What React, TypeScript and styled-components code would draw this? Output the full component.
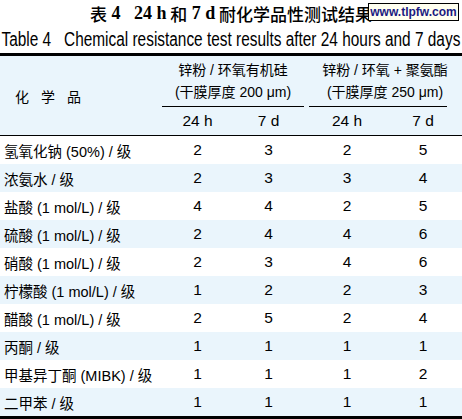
import React from 'react';
import styled, { createGlobalStyle } from 'styled-components';

const GlobalStyle = createGlobalStyle`
    body {
        margin: 0;
        background: #ffffff;
        font-family: "Liberation Sans", "Noto Sans CJK SC", sans-serif;
        color: #000000;
    }
`;

const COLUMNS = '162px 71px 71px 5px 76px 76px';

const Page = styled.div`
    width: 462px;
    display: flex;
    flex-direction: column;
    overflow: hidden;
`;

const TitleBar = styled.div`
    position: relative;
    height: 26px;
    display: flex;
    align-items: center;
    justify-content: center;
    font-family: "Liberation Serif", "Noto Sans CJK SC", serif;
    font-weight: bold;
    font-size: 18px;
    white-space: pre;
`;

const TitleCjk = styled.span`
    font-family: "Noto Sans CJK SC", sans-serif;
    font-weight: 500;
    font-size: 17px;
`;

const Watermark = styled.div`
    position: absolute;
    left: 368px;
    top: 3px;
    width: 89px;
    height: 16px;
    border: 1px solid #000000;
    background: #fffff0;
    color: #1a1a80;
    font-family: "Liberation Sans", Arial, sans-serif;
    font-weight: bold;
    font-size: 12px;
    line-height: 16px;
    text-align: center;
`;

const Subtitle = styled.div`
    height: 27px;
    display: flex;
    align-items: center;
    justify-content: center;
    font-size: 20px;
    white-space: pre;
`;

/* the print face is a condensed grotesque; squeeze Liberation Sans to match */
const Condensed = styled.span<{ $scale: number }>`
    display: inline-block;
    flex-shrink: 0;
    transform: scaleX(${(p) => p.$scale});
`;

const Header = styled.div`
    display: grid;
    grid-template-columns: ${COLUMNS};
    grid-template-rows: 51px 28px;
    background: #eaf5fc;
    border-top: 3px solid #000000;
    border-bottom: 1px solid #000000;
`;

const ChemHead = styled.div`
    grid-row: 1 / span 2;
    grid-column: 1;
    display: flex;
    align-items: center;
    padding-left: 15px;
    letter-spacing: 12px;
    font-family: "Noto Sans CJK SC", sans-serif;
    font-size: 14px;
`;

const Group = styled.div<{ $col: number }>`
    grid-row: 1;
    grid-column: ${(p) => p.$col} / span 2;
    display: flex;
    flex-direction: column;
    justify-content: flex-end;
`;

const GroupLabel = styled.div`
    text-align: center;
    line-height: 22px;
    font-size: 14px;
    white-space: pre;
`;

const Rule = styled.div<{ $inset: number }>`
    height: 1px;
    margin: 3px ${(p) => p.$inset}px 0 0;
    background: #000000;
`;

const SubHead = styled.div<{ $col: number }>`
    grid-row: 2;
    grid-column: ${(p) => p.$col};
    display: flex;
    align-items: center;
    justify-content: center;
    font-size: 15.5px;
`;

const Row = styled.div<{ $shaded: boolean }>`
    display: grid;
    grid-template-columns: ${COLUMNS};
    height: 28px;
    align-items: center;
    background: ${(p) => (p.$shaded ? '#eaf5fc' : '#ffffff')};
    font-size: 15.5px;
`;

const NameCell = styled.div`
    padding-left: 4px;
    white-space: nowrap;
    font-size: 14.5px;
`;

const NumCell = styled.div<{ $col: number }>`
    grid-column: ${(p) => p.$col};
    text-align: center;
`;

const Body = styled.div`
    display: flex;
    flex-direction: column;
    border-bottom: 3px solid #000000;
`;

const rows: [string, number[]][] = [
    ['氢氧化钠 (50%) / 级', [2, 3, 2, 5]],
    ['浓氨水 / 级', [2, 3, 3, 4]],
    ['盐酸 (1 mol/L) / 级', [4, 4, 2, 5]],
    ['硫酸 (1 mol/L) / 级', [2, 4, 4, 6]],
    ['硝酸 (1 mol/L) / 级', [2, 3, 4, 6]],
    ['柠檬酸 (1 mol/L) / 级', [1, 2, 2, 3]],
    ['醋酸 (1 mol/L) / 级', [2, 5, 2, 4]],
    ['丙酮 / 级', [1, 1, 1, 1]],
    ['甲基异丁酮 (MIBK) / 级', [1, 1, 1, 2]],
    ['二甲苯 / 级', [1, 1, 1, 1]],
];

const valueCols = [2, 3, 5, 6];

export default function App() {
    return (
        <Page>
            <GlobalStyle />
            <TitleBar>
                <TitleCjk>表</TitleCjk> 4   24 h<TitleCjk> 和</TitleCjk> 7 d
                <TitleCjk> 耐化学品性测试结果</TitleCjk>
                <Watermark>www.tlpfw.com</Watermark>
            </TitleBar>
            <Subtitle>
                <Condensed $scale={0.77}>
                    Table 4   Chemical resistance test results after 24 hours and 7 days
                </Condensed>
            </Subtitle>
            <Header>
                <ChemHead>化学品</ChemHead>
                <Group $col={2}>
                    <GroupLabel>锌粉 / 环氧有机硅</GroupLabel>
                    <GroupLabel>(干膜厚度 200 μm)</GroupLabel>
                    <Rule $inset={0} />
                </Group>
                <Group $col={5}>
                    <GroupLabel>锌粉 / 环氧 + 聚氨酯</GroupLabel>
                    <GroupLabel>(干膜厚度 250 μm)</GroupLabel>
                    <Rule $inset={14} />
                </Group>
                <SubHead $col={2}>24 h</SubHead>
                <SubHead $col={3}>7 d</SubHead>
                <SubHead $col={5}>24 h</SubHead>
                <SubHead $col={6}>7 d</SubHead>
            </Header>
            <Body>
                {rows.map(([name, values], i) => (
                    <Row key={name} $shaded={i % 2 === 1}>
                        <NameCell>{name}</NameCell>
                        {values.map((v, j) => (
                            <NumCell key={j} $col={valueCols[j]}>
                                {v}
                            </NumCell>
                        ))}
                    </Row>
                ))}
            </Body>
        </Page>
    );
}
